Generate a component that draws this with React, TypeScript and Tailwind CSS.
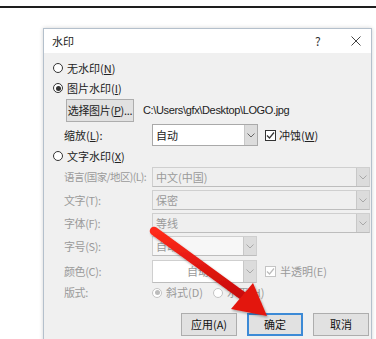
import React from "react";

const cjk = { fontFamily: '"Noto Sans CJK SC", "Noto Sans", sans-serif' };

function Radio({ checked, disabled }: { checked?: boolean; disabled?: boolean }) {
  return (
    <span
      className={`inline-flex shrink-0 items-center justify-center w-[10px] h-[10px] rounded-full border bg-white ${
        disabled ? "border-[#c4c4c4]" : "border-[#333]"
      }`}
    >
      {checked && <span className={`w-[5px] h-[5px] rounded-full ${disabled ? "bg-[#bcbcbc]" : "bg-[#333]"}`} />}
    </span>
  );
}

function Check({ disabled }: { disabled?: boolean }) {
  return (
    <span
      className={`inline-flex items-center justify-center w-[11px] h-[11px] border bg-white ${
        disabled ? "border-[#c4c4c4]" : "border-[#333]"
      }`}
    >
      <svg width="9" height="9" viewBox="0 0 9 9">
        <path d="M1 4.5 L3.5 7 L8 1.5" fill="none" stroke={disabled ? "#bcbcbc" : "#333"} strokeWidth="1.2" />
      </svg>
    </span>
  );
}

function Chevron({ color = "#777" }: { color?: string }) {
  return (
    <svg width="8" height="5" viewBox="0 0 8 5">
      <path d="M0.5 0.5 L4 4 L7.5 0.5" fill="none" stroke={color} strokeWidth="1" />
    </svg>
  );
}

function Select({
  w,
  h,
  text,
  disabled,
  bg,
  center,
}: {
  w: string;
  h: string;
  text?: string;
  disabled?: boolean;
  bg?: string;
  center?: boolean;
}) {
  return (
    <div
      className={`flex shrink-0 ${w} ${h} border ${disabled ? "border-[#cfcfcf] border-b-[#bdbdbd]" : "border-[#a9a9a9]"} ${
        bg ?? "bg-white"
      }`}
    >
      <div
        className={`flex-1 flex items-center whitespace-nowrap ${center ? "justify-center" : ""} px-[3px] text-[11px] ${
          disabled ? "text-[#9a9a9a]" : "text-[#222]"
        }`}
      >
        {text}
      </div>
      <div className="w-[13px] flex items-center justify-center bg-[#dcdcdc] border-l border-[#c8c8c8]">
        <Chevron color={disabled ? "#a8a8a8" : "#666"} />
      </div>
    </div>
  );
}

function Btn({ label, primary }: { label: string; primary?: boolean }) {
  return (
    <div
      className={`w-[56px] h-[23px] flex items-center justify-center whitespace-nowrap text-[11px] text-[#111] bg-[#e1e1e1] ${
        primary ? "border-2 border-[#3c8ad6]" : "border border-[#adadad]"
      }`}
    >
      {label}
    </div>
  );
}

export default function App() {
  const labelCls = "w-[88px] shrink-0 whitespace-nowrap text-[11px] tracking-[-0.4px] text-[#9a9a9a]";
  return (
    <div className="relative w-[376px] h-[339px] bg-white overflow-hidden" style={cjk}>
      <div className="h-[6px]" />
      <div className="h-[2px] bg-[#1e1e1e]" />
      <div className="h-[20px]" />
      <div className="ml-[43px] w-[329px] h-[320px] border border-[#b4c0cc] shadow-[0_0_4px_rgba(0,0,0,0.18)] bg-[#f0f0f0]">
        <div className="h-[24px] bg-white flex items-center pl-[8px] pr-[10px] text-[11px] text-[#222]">
          <span className="flex-1">水印</span>
          <span className="w-[12px] text-[12px] text-[#333] mr-[24px]">?</span>
          <svg width="10" height="10" viewBox="0 0 10 10">
            <path d="M0.5 0.5 L9.5 9.5 M9.5 0.5 L0.5 9.5" stroke="#444" strokeWidth="1" />
          </svg>
        </div>
        <div className="pl-[9px] pr-[2px] text-[11px] text-[#222] whitespace-nowrap">
          <div className="h-[5px]" />
          <div className="h-[20px] flex items-center gap-[4px]">
            <Radio />
            <span>
              无水印(<u>N</u>)
            </span>
          </div>
          <div className="h-[20px] flex items-center gap-[4px]">
            <Radio checked />
            <span>
              图片水印(<u>I</u>)
            </span>
          </div>
          <div className="mt-[1px] h-[23px] flex items-center pl-[13px]">
            <div className="w-[68px] h-[23px] shrink-0 flex items-center justify-center whitespace-nowrap tracking-[-0.3px] bg-[#e1e1e1] border border-[#adadad]">
              选择图片(<u>P</u>)...
            </div>
            <span className="ml-[9px] text-[11px] tracking-[-0.35px]" style={{ fontFamily: '"Liberation Sans", sans-serif' }}>
              C:\Users\gfx\Desktop\LOGO.jpg
            </span>
          </div>
          <div className="mt-[2px] h-[22px] flex items-center pl-[11px]">
            <span className="w-[88px] shrink-0">
              缩放(<u>L</u>):
            </span>
            <Select w="w-[106px]" h="h-[22px]" text="自动" />
            <span className="ml-[7px] flex">
              <Check />
            </span>
            <span className="ml-[3px]">
              冲蚀(<u>W</u>)
            </span>
          </div>
          <div className="h-[20px] flex items-center gap-[4px]">
            <Radio />
            <span>
              文字水印(<u>X</u>)
            </span>
          </div>
          <div className="mt-[1px] h-[20px] flex items-center pl-[11px]">
            <span className="w-[88px] shrink-0 whitespace-nowrap text-[10.5px] tracking-[-0.6px] text-[#9a9a9a]">
              语言(国家/地区)(L):
            </span>
            <Select w="w-[218px]" h="h-[20px]" text="中文(中国)" disabled bg="bg-[#efefef]" />
          </div>
          <div className="mt-[3px] h-[20px] flex items-center pl-[11px]">
            <span className={labelCls}>文字(T):</span>
            <Select w="w-[218px]" h="h-[20px]" text="保密" disabled bg="bg-[#efefef]" />
          </div>
          <div className="mt-[3px] h-[20px] flex items-center pl-[11px]">
            <span className={labelCls}>字体(F):</span>
            <Select w="w-[218px]" h="h-[20px]" text="等线" disabled bg="bg-[#efefef]" />
          </div>
          <div className="mt-[3px] h-[20px] flex items-center pl-[11px]">
            <span className={labelCls}>字号(S):</span>
            <Select w="w-[105px]" h="h-[20px]" text="自动" disabled bg="bg-[#f7f7f7]" />
          </div>
          <div className="mt-[4px] h-[23px] flex items-center pl-[11px]">
            <span className={labelCls}>颜色(C):</span>
            <Select w="w-[105px]" h="h-[23px]" text="自动" disabled center bg="bg-white" />
            <span className="ml-[8px] flex">
              <Check disabled />
            </span>
            <span className="ml-[4px] text-[#9a9a9a]">半透明(E)</span>
          </div>
          <div className="h-[19px] flex items-center pl-[11px]">
            <span className={labelCls}>版式:</span>
            <span className="flex items-center gap-[4px] text-[#9a9a9a]">
              <Radio checked disabled />
              斜式(D)
            </span>
            <span className="ml-[10px] flex items-center gap-[4px] text-[#9a9a9a]">
              <Radio disabled />
              水平(H)
            </span>
          </div>
          <div className="mt-[11px] flex justify-end gap-[10px]">
            <Btn label="应用(A)" />
            <Btn label="确定" primary />
            <Btn label="取消" />
          </div>
        </div>
      </div>
      <svg className="absolute left-0 top-0 pointer-events-none" width="376" height="339" viewBox="0 0 376 339">
        <defs>
          <linearGradient id="ar" x1="0" y1="0" x2="0" y2="1">
            <stop offset="0" stopColor="#ff2a1a" />
            <stop offset="1" stopColor="#c80a0a" />
          </linearGradient>
          <filter id="sh" x="-20%" y="-20%" width="140%" height="140%">
            <feDropShadow dx="1" dy="1.5" stdDeviation="1.2" floodColor="#000" floodOpacity="0.35" />
          </filter>
        </defs>
        <g filter="url(#sh)">
          <path d="M154 231 L243 296" stroke="url(#ar)" strokeWidth="8.5" strokeLinecap="round" />
          <polygon points="267,316 253,283 231,309" fill="#e3150f" />
        </g>
      </svg>
    </div>
  );
}
